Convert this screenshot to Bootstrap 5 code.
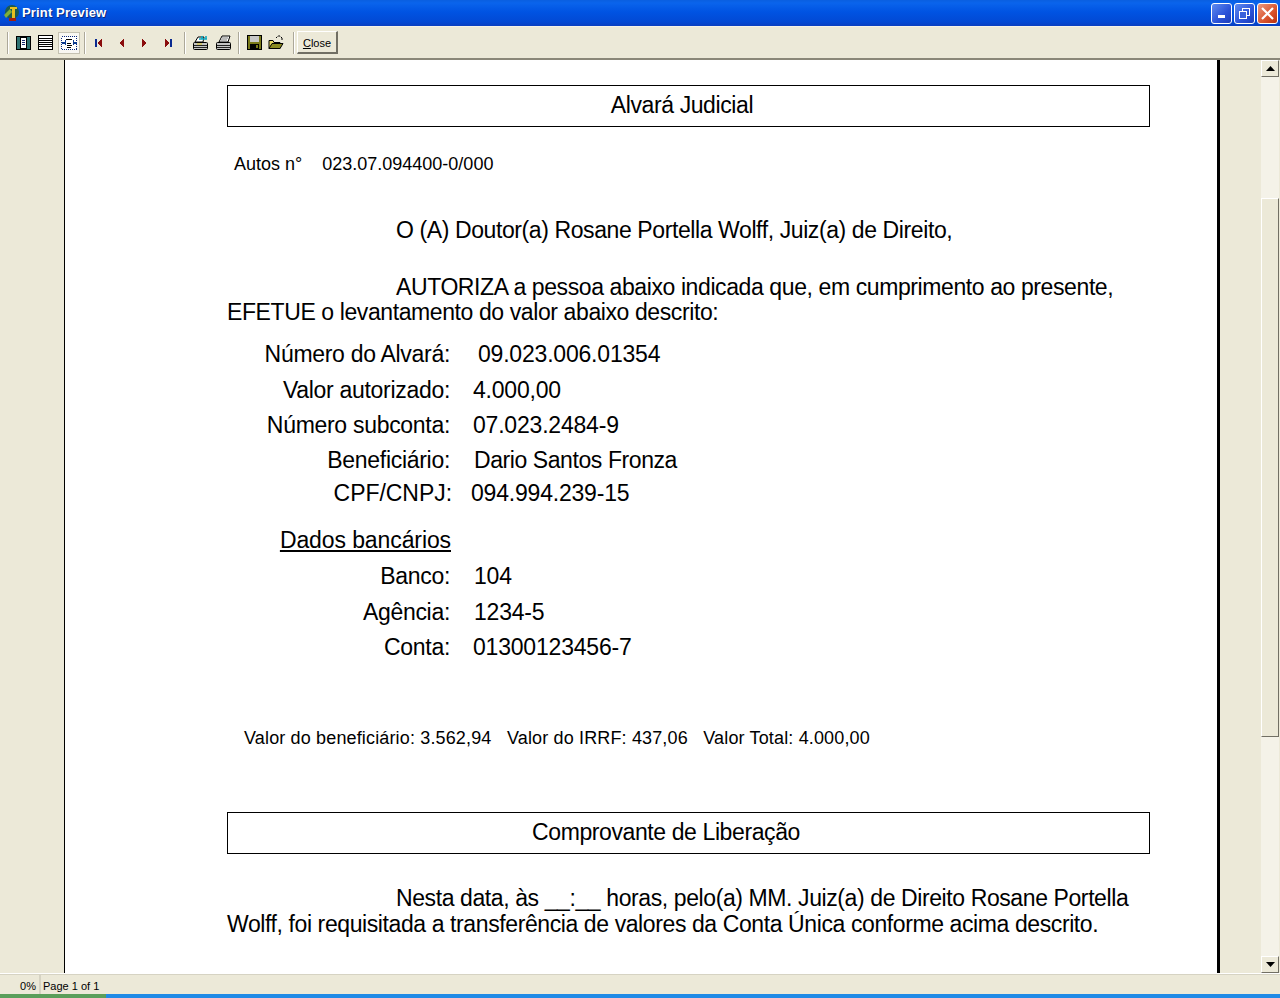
<!DOCTYPE html>
<html lang="pt-br">
<head>
  <meta charset="UTF-8">
  <title>Print Preview</title>
  <link href="https://cdn.jsdelivr.net/npm/bootstrap@5.3.0/dist/css/bootstrap.min.css" rel="stylesheet">
  <style>
    html, body { height: 998px; overflow: hidden; }
    body { background: #ece9d8; font-family: "Liberation Sans", Arial, sans-serif; color: #000; display: flex; flex-direction: column; }
    .title-bar { height: 26px; background: linear-gradient(#0a5fe0 0, #0a64ec 3px, #0053e2 12px, #0249d4 22px, #0a3fc0 26px); color: #fff; font-size: 13px; font-weight: 700; letter-spacing: .15px; text-shadow: 1px 1px 0 #0a2a80; padding: 0 2px 0 3px; }
    .win-btn { width: 21px; height: 21px; border: 1px solid #fff; border-radius: 3px; background: linear-gradient(135deg, #5f8cf0, #2a52d8 60%, #1c3cb8); }
    .win-btn.close-x { background: linear-gradient(135deg, #ec9a80, #d9532c 60%, #b83010); }
    .tool-bar { height: 34px; padding-left: 7px; border-top: 1px solid #f4f2e8; border-bottom: 2px solid #8a8778; background: #ece9d8; }
    .sep { width: 2px; height: 22px; background: #aca899; border-right: 1px solid #fff; }
    .tb-icon { width: 22px; height: 22px; flex: none; }
    .tb-icon.on { background: #f8f7f2; border: 1px solid #c5c2b2; }
    .ml1 { margin-left: 1px; } .ml2 { margin-left: 2px; } .ml3 { margin-left: 3px; }
    .ml5 { margin-left: 5px; } .ml6 { margin-left: 6px; }
    .close-btn { width: 41px; height: 23px; border: 1px solid #fff; border-right: 2px solid #716f64; border-bottom: 2px solid #716f64; font-size: 11px; line-height: 22px; background: #ece9d8; }
    .work { flex: 1 1 auto; min-height: 0; }
    .side-l { width: 65px; border-right: 1px solid #000; }
    .sheet { width: 1155px; background: #fff; border-right: 3px solid #000; overflow: hidden; padding: 25px 0 0 162px; }
    .side-r { width: 60px; }
    .scroll-track { width: 18px; margin-right: 1px; background-color: #f4f2e8; background-image: radial-gradient(#dedccf 0.5px, transparent 0.6px); background-size: 2px 2px; }
    .scroll-btn { height: 17px; background: #ece9d8; border: 1px solid #fff; border-right-color: #716f64; border-bottom-color: #716f64; }
    .scroll-thumb { height: 539px; margin-top: 121px; background: #ece9d8; border: 1px solid #fff; border-right-color: #716f64; border-bottom-color: #716f64; }
    .doc-box { width: 923px; height: 42px; border: 1px solid #000; font-size: 23px; line-height: 38px; letter-spacing: -0.4px; }
    .box-a { padding-right: 13px; }
    .box-b { padding-right: 45px; margin-top: 64px; }
    .doc-line { font-size: 23px; letter-spacing: -0.4px; white-space: nowrap; line-height: 25px; }
    .doc-small { font-size: 18px; white-space: nowrap; line-height: 20px; }
    .autos { margin-top: 27px; padding-left: 7px; }
    .totals { margin-top: 68px; padding-left: 17px; letter-spacing: .15px; }
    .indent { padding-left: 169px; }
    .top-44 { margin-top: 44px; }
    .top-32 { margin-top: 32px; }
    .top-33 { margin-top: 33px; }
    .top-1 { margin-top: 1px; }
    .field { display: flex; white-space: nowrap; font-size: 23px; line-height: 26px; }
    .field-k { width: 223px; text-align: right; flex: none; letter-spacing: -0.3px; }
    .field-v { padding-left: 23px; letter-spacing: -0.2px; }
    .v-alvara { padding-left: 28px; }
    .v-name { padding-left: 24px; letter-spacing: -0.42px; }
    .v-near { padding-left: 24px; }
    .k-cpf { width: 225px; letter-spacing: -0.05px; }
    .v-cpf { padding-left: 19px; }
    .k-dados { letter-spacing: -0.1px; padding-left: 0; width: 224px; }
    .row-7 { margin-top: 7px; } .row-9 { margin-top: 9px; } .row-10 { margin-top: 10px; }
    .row-21 { margin-top: 21px; }
    .status-bar { height: 21px; border-top: 1px solid #fff; box-shadow: inset 0 1px 0 #d6d3c3; font-size: 11px; line-height: 24px; }
    .st-pct { width: 41px; text-align: right; padding-right: 3px; border-right: 2px solid #d6d3c3; }
    .st-page { padding-left: 2px; }
    .task-strip { height: 4px; background: linear-gradient(90deg, #5a9e5a 106px, #1f8ae6 106px); }
  </style>
</head>
<body>
  <div class="title-bar d-flex align-items-center flex-shrink-0">
    <svg width="17" height="19" viewBox="0 0 17 19" class="flex-shrink-0">
      <circle cx="9" cy="8" r="7" fill="#1d5a50"/>
      <path d="M1 11 L7 5 L9 8 L3 14Z" fill="#7fae3a"/>
      <path d="M7 3 h7 v2 h-2 v9 h-3 v-9 h-2Z" fill="#e8c020"/>
      <path d="M6 14 h7 v3 h-7Z" fill="#a02010"/>
    </svg>
    <span class="ml2">Print Preview</span>
    <div class="ms-auto d-flex ms-auto">
      <div class="win-btn d-flex align-items-end justify-content-center pb-1">
        <svg width="10" height="4"><rect x="1" y="0" width="7" height="3" fill="#fff"/></svg>
      </div>
      <div class="win-btn ml2 d-flex align-items-center justify-content-center">
        <svg width="13" height="13" fill="none" stroke="#fff"><rect x="4.5" y="1.5" width="7" height="7"/><rect x="1.5" y="4.5" width="7" height="7" fill="#3a62dc"/></svg>
      </div>
      <div class="win-btn close-x ml2 d-flex align-items-center justify-content-center">
        <svg width="13" height="13" stroke="#fff" stroke-width="2.2"><path d="M1 1 L12 12 M12 1 L1 12"/></svg>
      </div>
    </div>
  </div>

  <div class="tool-bar d-flex align-items-center flex-shrink-0">
    <div class="sep"></div>
    <div class="tb-icon ml3 d-flex align-items-center justify-content-center">
      <svg width="15" height="14" shape-rendering="crispEdges"><rect x="0.5" y="0.5" width="14" height="13" rx="1" fill="#2f7272" stroke="#000"/><rect x="4.5" y="1.5" width="6" height="11" fill="#fff" stroke="#000"/><path d="M6 4h3M6 6h3M6 8h3" stroke="#1a2a70"/></svg>
    </div>
    <div class="tb-icon d-flex align-items-center justify-content-center">
      <svg width="15" height="15" shape-rendering="crispEdges"><rect x="0.5" y="0.5" width="14" height="14" rx="1" fill="#fff" stroke="#000"/><path d="M1 3.5h13M1 5.5h13M1 7.5h13M1 9.5h13M1 11.5h13" stroke="#000"/></svg>
    </div>
    <div class="tb-icon on ml2 d-flex align-items-center justify-content-center">
      <svg width="16" height="14" shape-rendering="crispEdges"><rect x="0.5" y="0.5" width="15" height="13" fill="#fff" stroke="#0a2a80" stroke-dasharray="1 1"/><path d="M5 3.5h6M6 9.5h5M6 11.5h4M6 7.5h4" stroke="#000"/><path d="M1 6h3v-2l-0 5v-2H1ZM15 6h-3v-2l0 5v-2h3Z" fill="#0a3a90" stroke="#0a3a90"/></svg>
    </div>
    <div class="sep ms-1"></div>
    <div class="tb-icon ml2 d-flex align-items-center justify-content-center">
      <svg width="10" height="10" shape-rendering="crispEdges"><rect x="1" y="1" width="2" height="8" fill="#0a2a90"/><path d="M8 0v10L4 5Z" fill="#8a0c0c"/></svg>
    </div>
    <div class="tb-icon ml1 d-flex align-items-center justify-content-center">
      <svg width="10" height="10" shape-rendering="crispEdges"><path d="M7 0v10L3 5Z" fill="#8a0c0c"/></svg>
    </div>
    <div class="tb-icon d-flex align-items-center justify-content-center">
      <svg width="10" height="10" shape-rendering="crispEdges"><path d="M3 0v10l4-5Z" fill="#8a0c0c"/></svg>
    </div>
    <div class="tb-icon ml2 d-flex align-items-center justify-content-center">
      <svg width="10" height="10" shape-rendering="crispEdges"><path d="M2 0v10l4-5Z" fill="#8a0c0c"/><rect x="7" y="1" width="2" height="8" fill="#0a2a90"/></svg>
    </div>
    <div class="sep ml5"></div>
    <div class="tb-icon ml3 d-flex align-items-center justify-content-center">
      <svg width="17" height="16"><path d="M3 7l3-5h6l-1 5Z" fill="#fff" stroke="#000"/><path d="M7 4h8M10 1v3M14 1v3" stroke="#10a8c0" stroke-width="1.6"/><rect x="1.5" y="7.5" width="14" height="7" rx="1" fill="#c4c4c4" stroke="#000"/><path d="M2 10.5h13M2 12.5h13" stroke="#222"/><path d="M5 9h5" stroke="#d8c020"/></svg>
    </div>
    <div class="tb-icon ml1 d-flex align-items-center justify-content-center">
      <svg width="17" height="16"><path d="M4 7l3-6h8l-2 6Z" fill="#fff" stroke="#000"/><path d="M7 3h6M6 5h6" stroke="#777"/><rect x="1.5" y="7.5" width="14" height="7" rx="1" fill="#c4c4c4" stroke="#000"/><path d="M2 10.5h13M2 12.5h13" stroke="#222"/></svg>
    </div>
    <div class="sep ms-1"></div>
    <div class="tb-icon ml3 d-flex align-items-center justify-content-center">
      <svg width="15" height="15" shape-rendering="crispEdges"><rect x="0.5" y="0.5" width="14" height="14" fill="#7a7a18" stroke="#000"/><rect x="3" y="1" width="9" height="6" fill="#c8c8c8"/><rect x="3" y="9" width="9" height="5" fill="#000"/><rect x="9" y="10" width="2" height="3" fill="#7a7a18"/></svg>
    </div>
    <div class="tb-icon d-flex align-items-center justify-content-center">
      <svg width="16" height="15"><path d="M1 5.5h4l1 2h6v6H1Z" fill="#e8d860" stroke="#000"/><path d="M1 13.5l3-5h11l-3 5Z" fill="#8a8a20" stroke="#000"/><path d="M8 3l2-2h2l2 2M14 3v2" fill="none" stroke="#000" stroke-dasharray="2 1"/></svg>
    </div>
    <div class="sep ml6"></div>
    <div class="close-btn ml2 text-center"><u>C</u>lose</div>
  </div>

  <div class="work d-flex">
    <div class="side-l flex-shrink-0"></div>
    <div class="sheet flex-shrink-0">
      <div class="doc-box box-a text-center">Alvará Judicial</div>
      <div class="doc-small autos">Autos n°&nbsp;&nbsp;&nbsp;&nbsp;023.07.094400-0/000</div>
      <div class="doc-line indent top-44">O (A) Doutor(a) Rosane Portella Wolff, Juiz(a) de Direito,</div>
      <div class="doc-line indent top-32">AUTORIZA a pessoa abaixo indicada que, em cumprimento ao presente,</div>
      <div class="doc-line">EFETUE o levantamento do valor abaixo descrito:</div>
      <div class="field mt-3"><span class="field-k">Número do Alvará:</span><span class="field-v v-alvara">09.023.006.01354</span></div>
      <div class="field row-10"><span class="field-k">Valor autorizado:</span><span class="field-v">4.000,00</span></div>
      <div class="field row-9"><span class="field-k">Número subconta:</span><span class="field-v">07.023.2484-9</span></div>
      <div class="field row-9"><span class="field-k">Beneficiário:</span><span class="field-v v-name">Dario Santos Fronza</span></div>
      <div class="field row-7"><span class="field-k k-cpf">CPF/CNPJ:</span><span class="field-v v-cpf">094.994.239-15</span></div>
      <div class="field row-21"><span class="field-k k-dados"><u>Dados bancários</u></span></div>
      <div class="field row-10"><span class="field-k">Banco:</span><span class="field-v v-near">104</span></div>
      <div class="field row-10"><span class="field-k">Agência:</span><span class="field-v v-near">1234-5</span></div>
      <div class="field row-9"><span class="field-k">Conta:</span><span class="field-v">01300123456-7</span></div>
      <div class="doc-small totals">Valor do beneficiário: 3.562,94&nbsp;&nbsp;&nbsp;Valor do IRRF: 437,06&nbsp;&nbsp;&nbsp;Valor Total: 4.000,00</div>
      <div class="doc-box box-b text-center">Comprovante de Liberação</div>
      <div class="doc-line indent mt-4 pt-2">Nesta data, às __:__ horas, pelo(a) MM. Juiz(a) de Direito Rosane Portella</div>
      <div class="doc-line top-1">Wolff, foi requisitada a transferência de valores da Conta Única conforme acima descrito.</div>
    </div>
    <div class="side-r flex-shrink-0 d-flex justify-content-end">
      <div class="scroll-track d-flex flex-column">
        <div class="scroll-btn d-flex align-items-center justify-content-center"><svg width="9" height="5"><path d="M4.5 0L9 5H0Z" fill="#000"/></svg></div>
        <div class="scroll-thumb"></div>
        <div class="scroll-btn mt-auto d-flex align-items-center justify-content-center"><svg width="9" height="5"><path d="M0 0H9L4.5 5Z" fill="#000"/></svg></div>
      </div>
    </div>
  </div>

  <div class="status-bar d-flex flex-shrink-0">
    <div class="st-pct">0%</div>
    <div class="st-page">Page 1 of 1</div>
  </div>
  <div class="task-strip flex-shrink-0"></div>
  <script src="https://cdn.jsdelivr.net/npm/bootstrap@5.3.0/dist/js/bootstrap.bundle.min.js"></script>
</body>
</html>
